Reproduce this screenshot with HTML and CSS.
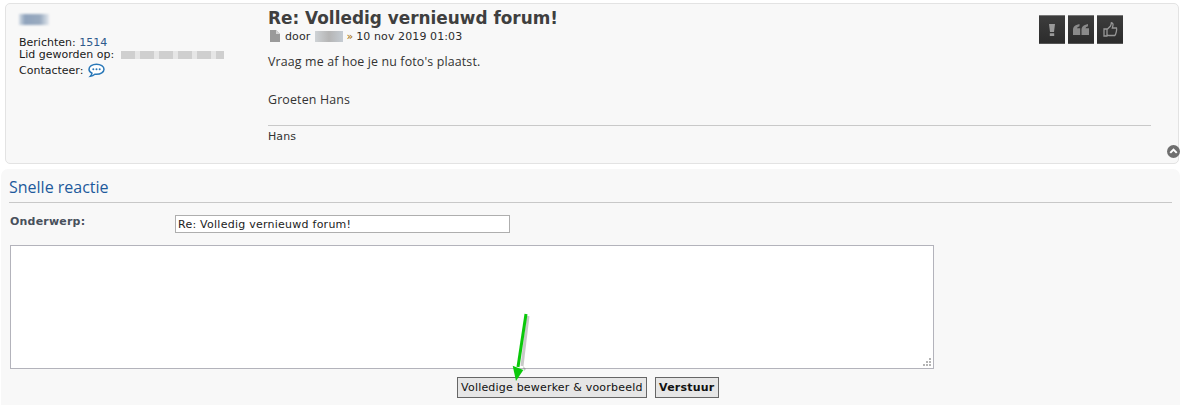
FILE: index.html
```html
<!DOCTYPE html>
<html lang="nl">
<head>
<meta charset="utf-8">
<title>Re: Volledig vernieuwd forum!</title>
<link rel="stylesheet" href="styles.css">
</head>
<body>
<div class="page">
  <article class="post">
    <aside class="poster">
      <div class="name-blur"></div>
      <ul class="poster-info">
        <li>Berichten: <span class="count">1514</span></li>
        <li class="joined">Lid geworden op: <span class="date-blur"></span></li>
        <li class="contact">Contacteer:
          <svg class="bubble" width="17" height="15" viewBox="0 0 17 15" aria-hidden="true">
            <path d="M8.500 1.200C4.400 1.200 1 3.400 1 6.200c0 1.700 1.200 3.100 3 4-.2 1.100-.8 2.200-1.600 3 1.800-.2 3.300-1 4.400-2 .6.100 1.100.100 1.700.100 4.100 0 7.500-2.300 7.500-5.100S12.600 1.200 8.500 1.200z" fill="#fff" stroke="#2a78b8" stroke-width="1.500"/>
            <circle cx="5.300" cy="6.200" r="1" fill="#2a78b8"/><circle cx="8.500" cy="6.200" r="1" fill="#2a78b8"/><circle cx="11.700" cy="6.200" r="1" fill="#2a78b8"/>
          </svg>
        </li>
      </ul>
    </aside>
    <div class="content">
      <header class="post-head">
        <div>
          <h2 class="post-title">Re: Volledig vernieuwd forum!</h2>
          <p class="meta">
            <svg class="doc" width="10" height="12" viewBox="0 0 10 12" aria-hidden="true"><path d="M0 0h6l4 4v8H0z" fill="#9a9a9a"/><path d="M6 0l4 4H6z" fill="#d5d5d5"/></svg>
            <span>door</span><span class="author-blur"></span><span class="raquo">»</span><span>10 nov 2019 01:03</span>
          </p>
        </div>
        <div class="actions">
          <a class="action"><svg width="8" height="14" viewBox="0 0 8 14" aria-hidden="true"><path d="M1 1h6L6 9H2zM1.800 10.300h4.400V13H1.800z" fill="#9a9a9a"/></svg></a>
          <a class="action"><svg width="16" height="11" viewBox="0 0 16 11" aria-hidden="true"><path d="M0 6C0 3 1.700 1 6.500 0v2.200C5 2.700 4.200 3.300 4 4.300h3.200V11H0zM8.500 6c0-3 1.700-5 6.500-6v2.200c-1.500.5-2.300 1.100-2.500 2.100H16V11H8.500z" fill="#8a8a8a"/></svg></a>
          <a class="action"><svg width="15" height="15" viewBox="0 0 15 15" aria-hidden="true"><path d="M1 7h3v7H1zM4 7.500L7.500 4c.6-1 .7-2 .9-3.300 1.500.1 1.900 1.500 1.500 3L9.300 6h4.200c.5 1.500-.5 6.500-1.700 7.500H6c-.7 0-1.500-.4-2-.8z" fill="none" stroke="#969696" stroke-width="1.300"/></svg></a>
        </div>
      </header>
      <div class="message">
        <p>Vraag me af hoe je nu foto's plaatst.</p>
        <p class="greeting">Groeten Hans</p>
      </div>
      <div class="signature">Hans</div>
    </div>
    <a class="to-top"><svg width="13" height="13" viewBox="0 0 14 14" aria-hidden="true"><circle cx="7" cy="7" r="7" fill="#6f6f6f"/><path d="M3.500 8.500L7 5l3.500 3.500" fill="none" stroke="#fff" stroke-width="2.200"/></svg></a>
  </article>

  <section class="reply">
    <h3 class="reply-title">Snelle reactie</h3>
    <div class="field">
      <label class="field-label" for="subject">Onderwerp:</label>
      <input class="subject" id="subject" type="text" value="Re: Volledig vernieuwd forum!">
    </div>
    <div class="editor-wrap">
      <textarea class="editor" aria-label="Bericht"></textarea>
      <svg class="grip" width="8" height="8" viewBox="0 0 8 8" aria-hidden="true"><path d="M6 0h2v2H6zM3 3h2v2H3zM6 3h2v2H6zM0 6h2v2H0zM3 6h2v2H3zM6 6h2v2H6z" fill="#b4b4b4"/></svg>
    </div>
    <div class="buttons">
      <button class="btn" type="button">Volledige bewerker &amp; voorbeeld</button>
      <button class="btn btn-primary" type="button">Verstuur</button>
    </div>
  </section>
</div>
<svg class="arrow" width="40" height="80" viewBox="0 0 40 80" aria-hidden="true">
  <path d="M21 8L15 58" stroke="#777" stroke-opacity=".4" stroke-width="3" fill="none" transform="translate(2 1)"/>
  <path d="M19 64l2-2-3-3z" fill="#777" fill-opacity=".4"/>
  <path d="M21 7L13 60" stroke="#0ac80a" stroke-width="3" fill="none"/>
  <path d="M7.700 58.700L18.300 63L11 74z" fill="#0ac80a"/>
</svg>
</body>
</html>
```

FILE: styles.css
```css
* { box-sizing: border-box; }

html, body { margin: 0; height: 100%; }

body {
  background: #fff;
  font-family: "DejaVu Sans", Verdana, sans-serif;
  font-size: 11px;
  letter-spacing: .1px;
  color: #222;
  overflow: hidden;
  position: relative;
}

.page {
  display: flex;
  flex-direction: column;
  gap: 5px;
  padding-top: 3px;
}

.post {
  position: relative;
  display: flex;
  height: 161px;
  margin: 0 4px 0 5px;
  background: #f8f8f8;
  border: 1px solid #e3e3e3;
  border-radius: 5px;
}

.poster {
  width: 262px;
  flex: none;
  padding: 10px 0 0 13px;
}

.name-blur {
  width: 30px;
  height: 11px;
  background: linear-gradient(90deg, #d5dde6, #8fa3bc 20%, #9aabc0 70%, #e3e8ee);
  filter: blur(1px);
}

.poster-info {
  list-style: none;
  margin: 12px 0 0;
  padding: 0;
  line-height: 12px;
  letter-spacing: 0;
  color: #1a1a1a;
}

.count { color: #2f5a8c; }

.joined { display: flex; align-items: center; gap: 7px; }

.date-blur {
  width: 103px;
  height: 8px;
  background: repeating-linear-gradient(90deg, #cfcfcf 0 14px, #e6e6e6 14px 19px);
  filter: blur(.6px);
}

.contact { display: flex; align-items: center; gap: 5px; margin-top: 2px; height: 16px; }

.bubble { margin-top: -2px; }

.content {
  flex: 1;
  min-width: 0;
  padding: 4px 27px 0 0;
}

.post-head {
  display: flex;
  justify-content: space-between;
  align-items: flex-start;
}

.post-title {
  margin: 0;
  font-size: 16.900px;
  line-height: 21px;
  font-weight: 700;
  letter-spacing: 0;
  color: #3f3f3f;
}

.meta {
  display: flex;
  align-items: center;
  margin: 0;
  height: 14px;
  color: #2b2b2b;
  font-size: 11px;
}

.doc { margin: 0 5px 0 2px; }

.author-blur {
  width: 28px;
  height: 11px;
  margin: 0 3px 0 5px;
  background: linear-gradient(90deg, #cfd3d6, #b5b5b5 50%, #c5ccd3);
  filter: blur(.5px);
}

.raquo { color: #a06a00; margin: 0 3px 0 0; }

.actions {
  display: flex;
  gap: 3px;
  margin: 7px 28px 0 0;
}

.action {
  display: flex;
  align-items: center;
  justify-content: center;
  width: 26px;
  height: 29px;
  background: linear-gradient(#3c3c3c, #2c2c2c);
  border-top: 1px solid #777;
  border-bottom: 1px solid #555;
}

.message {
  margin-top: 8px;
  font-family: "Open Sans", "Noto Sans", sans-serif;
  font-size: 12.400px;
  letter-spacing: .15px;
  line-height: 19px;
  color: #333;
}

.message p { margin: 0; }

.greeting { margin-top: 19px !important; }

.signature {
  margin-top: 16px;
  padding-top: 4px;
  border-top: 1px solid #c9c9c9;
  font-size: 11px;
  line-height: 14px;
  color: #333;
}

.to-top {
  position: absolute;
  right: -2px;
  bottom: 5px;
  width: 13px;
  height: 13px;
}

.to-top svg { display: block; }

.reply {
  height: 236px;
  margin: 0 3px 0 1px;
  padding: 8px 8px 0 8px;
  background: #f8f8f8;
  border-radius: 7px 7px 0 0;
}

.reply-title {
  margin: 0;
  padding-bottom: 5px;
  border-bottom: 1px solid #c8c8c8;
  font-family: "Open Sans", "Noto Sans", sans-serif;
  font-size: 16px;
  line-height: 20px;
  font-weight: 400;
  letter-spacing: 0;
  color: #1d5a9c;
}

.field {
  display: flex;
  align-items: flex-start;
  margin-top: 12px;
}

.field-label {
  width: 166px;
  flex: none;
  padding-left: 1px;
  font-weight: 700;
  letter-spacing: .2px;
  color: #48505c;
  line-height: 13px;
}

.subject {
  width: 335px;
  height: 18px;
  padding: 0 2px;
  border: 1px solid #aeaeae;
  background: #fff;
  font: 11px "DejaVu Sans", Verdana, sans-serif;
  letter-spacing: .25px;
  color: #222;
}

.editor-wrap {
  position: relative;
  width: 924px;
  margin: 12px 0 0 1px;
}

.editor {
  display: block;
  width: 100%;
  height: 124px;
  padding: 2px;
  border: 1px solid #b3b3bb;
  background: #fff;
  resize: none;
}

.grip {
  position: absolute;
  right: 3px;
  bottom: 3px;
}

.buttons {
  display: flex;
  justify-content: center;
  gap: 8px;
  margin: 8px 5px 0 0;
}

.btn {
  height: 21px;
  padding: 0 3px;
  border: 1px solid #666;
  background: #e6e6e6;
  font: 11px "DejaVu Sans", Verdana, sans-serif;
  letter-spacing: .2px;
  color: #111;
}

.btn-primary { font-weight: 700; padding: 0 3.500px; }

.arrow {
  position: absolute;
  left: 505px;
  top: 307px;
}
```
